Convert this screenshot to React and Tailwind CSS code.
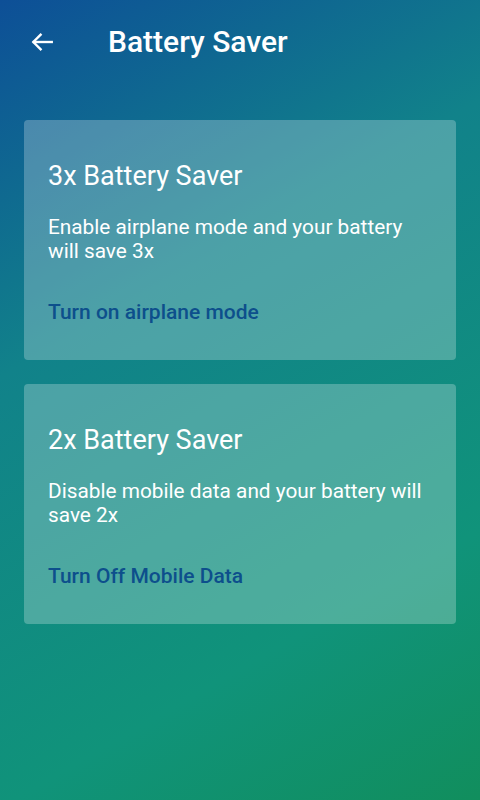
export default function App() {
  const cards = [
    {
      title: "3x Battery Saver",
      desc: "Enable airplane mode and your battery will save 3x",
      link: "Turn on airplane mode",
    },
    {
      title: "2x Battery Saver",
      desc: "Disable mobile data and your battery will save 2x",
      link: "Turn Off Mobile Data",
    },
  ];
  return (
    <div
      className="w-[480px] h-[800px] bg-[linear-gradient(150deg,#0d4f97_0%,#11828a_35%,#10937a_75%,#118e5d_100%)] text-white overflow-hidden"
      style={{ fontFamily: "Roboto, 'Liberation Sans', sans-serif" }}
    >
      <div className="flex items-center h-[86px] pb-[2px]">
        <div className="w-[108px] pl-[29px] flex items-center">
          <svg width="26" height="26" viewBox="0 0 24 24" fill="none" stroke="white" strokeWidth="2.2" strokeLinecap="square">
            <path d="M21 12H4.5" />
            <path d="M11.5 4.5L4 12l7.5 7.5" strokeLinecap="butt" />
          </svg>
        </div>
        <h1 className="text-[30px] font-medium leading-none">Battery Saver</h1>
      </div>
      <div className="flex flex-col gap-6 px-6 pt-[34px]">
        {cards.map((c) => (
          <div key={c.title} className="bg-white/25 rounded-[4px] px-6 pt-10 pb-[36px]">
            <div className="text-[27px] leading-8">{c.title}</div>
            <div className="text-[20.8px] leading-6 mt-[23px]">{c.desc}</div>
            <div className="text-[21px] leading-6 mt-[37px] font-medium text-[#0d4f8c]">{c.link}</div>
          </div>
        ))}
      </div>
    </div>
  );
}
